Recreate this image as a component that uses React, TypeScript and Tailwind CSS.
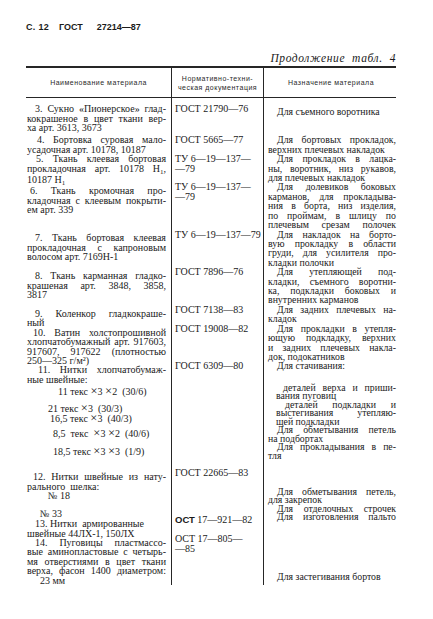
import React from "react";

type Ln = { t: string; j?: boolean; c?: string };
type Block = { mt: string; lines: Ln[] };

const J = (t: string, c = ""): Ln => ({ t, j: true, c });
const P = (t: string, c = ""): Ln => ({ t, c });

// "_1" -> subscript, "×" -> bigger cross
function renderText(s: string) {
  return s.split(/(_1|×)/).map((p, i) => {
    if (p === "_1")
      return (
        <span key={i} className="relative top-[2px] text-[7px]">
          1
        </span>
      );
    if (p === "×")
      return (
        <span key={i} className="text-[12.5px] leading-[0]">
          ×
        </span>
      );
    return <React.Fragment key={i}>{p}</React.Fragment>;
  });
}

function Line({ l }: { l: Ln }) {
  if (l.j) {
    return (
      <div className={`flex justify-between ${l.c ?? ""}`}>
        {l.t.split(/\s+/).map((w, i) => (
          <span key={i}>{renderText(w)}</span>
        ))}
      </div>
    );
  }
  return <div className={`whitespace-pre ${l.c ?? ""}`}>{renderText(l.t)}</div>;
}

function Column({ blocks, className }: { blocks: Block[]; className: string }) {
  return (
    <div className={className}>
      {blocks.map((b, i) => (
        <div key={i} className={b.mt}>
          {b.lines.map((l, k) => (
            <Line key={k} l={l} />
          ))}
        </div>
      ))}
    </div>
  );
}

const col1: Block[] = [
  {
    mt: "mt-[6.3px]",
    lines: [
      J("3. Сукно «Пионерское» глад-", "pl-[8px]"),
      J("кокрашеное в цвет ткани вер-"),
      P("ха арт. 3613, 3673"),
    ],
  },
  {
    mt: "mt-[2.8px]",
    lines: [J("4. Бортовка суровая мало-", "pl-[10px]"), P("усадочная арт. 10178, 10187")],
  },
  {
    mt: "mt-0",
    lines: [
      J("5. Ткань клеевая бортовая", "pl-[9px]"),
      J("прокладочная арт. 10178 Н_1,"),
      P("10187 Н_1"),
    ],
  },
  {
    mt: "mt-0",
    lines: [
      J("6. Ткань кромочная про-", "pl-[3px]"),
      J("кладочная с клеевым покрыти-"),
      P("ем арт. 339"),
    ],
  },
  {
    mt: "mt-[18.9px]",
    lines: [
      J("7. Ткань бортовая клеевая", "pl-[8px]"),
      J("прокладочная с капроновым"),
      P("волосом арт. 7169Н-1"),
    ],
  },
  {
    mt: "mt-[9.5px]",
    lines: [
      J("8. Ткань карманная гладко-", "pl-[8px]"),
      J("крашеная арт. 3848, 3858,"),
      P("3817"),
    ],
  },
  {
    mt: "mt-[9.5px]",
    lines: [J("9. Коленкор гладкокраше-", "pl-[8px]"), P("ный")],
  },
  {
    mt: "mt-0",
    lines: [
      J("10. Ватин холстопрошивной", "pl-[6px]"),
      J("хлопчатобумажный арт. 917603,"),
      J("917607, 917622 (плотностью"),
      P("250—325 г/м²)"),
    ],
  },
  {
    mt: "mt-0",
    lines: [J("11. Нитки хлопчатобумаж-", "pl-[11px]"), P("ные швейные:")],
  },
  { mt: "mt-[3.2px]", lines: [P("11 текс ×3 ×2  (30/6)", "pl-[31px]")] },
  {
    mt: "mt-[7.6px]",
    lines: [P("21 текс ×3  (30/3)", "pl-[21px]"), P("16,5 текс ×3  (40/3)", "pl-[23px]")],
  },
  { mt: "mt-[5.7px]", lines: [P("8,5  текс  ×3 ×2  (40/6)", "pl-[26px]")] },
  { mt: "mt-[9.1px]", lines: [P("18,5 текс ×3 ×3  (1/9)", "pl-[26px]")] },
  {
    mt: "mt-[15.6px]",
    lines: [J("12. Нитки швейные из нату-", "pl-[6px]"), P("рального  шелка:")],
  },
  { mt: "mt-0", lines: [P("№ 18", "pl-[21px]")] },
  { mt: "mt-[8.6px]", lines: [P("№ 33", "pl-[13px]")] },
  {
    mt: "mt-[0.6px]",
    lines: [P("13. Нитки  армированные", "pl-[8px]"), P("швейные 44ЛХ-1, 150ЛХ")],
  },
  {
    mt: "mt-0",
    lines: [
      J("14. Пуговицы пластмассо-", "pl-[8px]"),
      J("вые аминопластовые с четырь-"),
      J("мя отверстиями в цвет ткани"),
      J("верха, фасон 1400 диаметром:"),
    ],
  },
  { mt: "mt-0", lines: [P("23 мм", "pl-[13px]")] },
];

const col2: Block[] = [
  { mt: "mt-[6.3px]", lines: [P("ГОСТ 21790—76")] },
  { mt: "mt-[21.6px]", lines: [P("ГОСТ 5665—77")] },
  { mt: "mt-[9.4px]", lines: [P("ТУ 6—19—137—"), P("—79")] },
  { mt: "mt-[9.5px]", lines: [P("ТУ 6—19—137—"), P("—79")] },
  { mt: "mt-[28.3px]", lines: [P("ТУ 6—19—137—79")] },
  { mt: "mt-[28.3px]", lines: [P("ГОСТ 7896—76")] },
  { mt: "mt-[28.3px]", lines: [P("ГОСТ 7138—83")] },
  { mt: "mt-[9.4px]", lines: [P("ГОСТ 19008—82")] },
  { mt: "mt-[28.2px]", lines: [P("ГОСТ 6309—80")] },
  { mt: "mt-[97.6px]", lines: [P("ГОСТ 22665—83")] },
];

const col3Top: Ln[] = [
  J("Для бортовых прокладок,", "pl-[9px]"),
  P("верхних плечевых накладок"),
  J("Для прокладок в лацка-", "pl-[9px]"),
  J("ны, воротник, низ рукавов,"),
  P("для плечевых накладок"),
  J("Для долевиков боковых", "pl-[9px]"),
  J("карманов, для прокладыва-"),
  J("ния в борта, низ изделия,"),
  J("по проймам, в шлицу по"),
  J("плечевым срезам полочек"),
  J("Для накладок на борто-", "pl-[9px]"),
  J("вую прокладку в области"),
  J("груди, для усилителя про-"),
  P("кладки полочки"),
  J("Для утепляющей под-", "pl-[9px]"),
  J("кладки, съемного воротни-"),
  J("ка, подкладки боковых и"),
  P("внутренних карманов"),
  J("Для задних плечевых на-", "pl-[9px]"),
  P("кладок"),
  J("Для прокладки в утепля-", "pl-[9px]"),
  J("ющую подкладку, верхних"),
  J("и задних плечевых накла-"),
  P("док, подокатников"),
  P("Для стачивания:", "pl-[9px]"),
];

const col3Mid: Ln[] = [
  J("деталей верха и приши-", "pl-[15px]"),
  P("вания пуговиц", "pl-[8px]"),
  J("деталей подкладки и", "pl-[17px]"),
  J("выстегивания утепляю-", "pl-[8px]"),
  P("щей подкладки", "pl-[8px]"),
  J("Для обметывания петель", "pl-[9px]"),
  P("на подбортах"),
  J("Для прокладывания в пе-", "pl-[9px]"),
  P("тля"),
];

const col3Low: Ln[] = [
  J("Для обметывания петель,", "pl-[9px]"),
  P("для закрепок"),
  J("Для отделочных строчек", "pl-[9px]"),
  J("Для изготовления пальто", "pl-[9px]"),
];

export default function App() {
  return (
    <div className="w-[433px] h-[619px] overflow-hidden bg-white text-[#1a1a1a] font-['Liberation_Serif',serif]">
      <div className="pt-[22px] pl-[26px] flex items-center h-[33px] font-['Liberation_Sans',sans-serif] font-bold text-[9px] leading-[11px]">
        <span className="tracking-[0.3px]">С. 12</span>
        <span className="ml-[10px]">ГОСТ</span>
        <span className="ml-[14px]">27214—87</span>
      </div>

      <div className="ml-[26px] w-[370px]">
        <div className="mt-[19px] text-right italic text-[11.5px] leading-[13px] tracking-[0.6px] whitespace-pre">
          Продолжение  табл.  4
        </div>

        <div className="mt-[1px] border-t-2 border-[#262626]">
          {/* header */}
          <div className="grid grid-cols-[146px_92px_132px] h-[30px] border-b-[1.5px] border-[#262626] font-['Liberation_Sans',sans-serif] text-[7px] leading-[9px] tracking-[0.5px] text-[#2a2a2a]">
            <div className="flex items-center justify-center border-r-[1.5px] border-[#262626]">
              Наименование материала
            </div>
            <div className="flex flex-col items-center justify-center border-r-[1.5px] border-[#262626] text-center">
              <span>Нормативно-техни-</span>
              <span>ческая документация</span>
            </div>
            <div className="flex items-center justify-center pl-[2px]">Назначение материала</div>
          </div>

          {/* body */}
          <div className="grid grid-cols-[146px_92px_132px] h-[481px] text-[10px]">
            <Column
              blocks={col1}
              className="leading-[9.4px] pl-[1px] pr-[5px] border-r-[1.5px] border-[#262626]"
            />
            <div className="leading-[9.4px] pl-[3px] border-r-[1.5px] border-[#262626]">
              <Column blocks={col2} className="" />
              <div className="mt-[37.6px]">
                <span className="font-['Liberation_Sans',sans-serif] font-bold text-[9.5px]">ОСТ</span> 17—921—82
              </div>
              <div className="mt-[9.6px]">
                <div>ОСТ 17—805—</div>
                <div>—85</div>
              </div>
            </div>
            <div className="pl-[4px] text-[9.8px]">
              <div className="mt-[9.3px] leading-[9.4px]">
                <Line l={P("Для съемного воротника", "pl-[9px]")} />
              </div>
              <div className="mt-[18.6px] leading-[9.42px]">
                {col3Top.map((l, i) => (
                  <Line key={i} l={l} />
                ))}
              </div>
              <div className="mt-[12.95px] leading-[8.5px]">
                {col3Mid.map((l, i) => (
                  <Line key={i} l={l} />
                ))}
              </div>
              <div className="mt-[27.5px] leading-[8.5px]">
                {col3Low.map((l, i) => (
                  <Line key={i} l={l} />
                ))}
              </div>
              <div className="mt-[51px] leading-[8.5px]">
                <Line l={P("Для застегивания бортов", "pl-[9px]")} />
              </div>
            </div>
          </div>
        </div>
      </div>
    </div>
  );
}
